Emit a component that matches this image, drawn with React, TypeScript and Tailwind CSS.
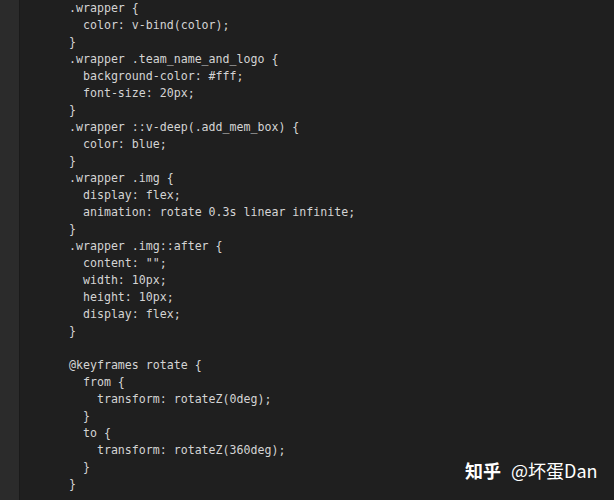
import React from "react";

const lines: string[] = [
  ".wrapper {",
  "  color: v-bind(color);",
  "}",
  ".wrapper .team_name_and_logo {",
  "  background-color: #fff;",
  "  font-size: 20px;",
  "}",
  ".wrapper ::v-deep(.add_mem_box) {",
  "  color: blue;",
  "}",
  ".wrapper .img {",
  "  display: flex;",
  "  animation: rotate 0.3s linear infinite;",
  "}",
  ".wrapper .img::after {",
  '  content: "";',
  "  width: 10px;",
  "  height: 10px;",
  "  display: flex;",
  "}",
  "",
  "@keyframes rotate {",
  "  from {",
  "    transform: rotateZ(0deg);",
  "  }",
  "  to {",
  "    transform: rotateZ(360deg);",
  "  }",
  "}",
];

export default function App() {
  return (
    <div className="relative flex h-[500px] w-[614px] overflow-hidden bg-[#1f1f1f]">
      <div className="w-[20px] shrink-0 bg-[#2b2b2b] border-r border-[#1a1a1a]" />
      <div className="pl-[49px] pt-0 mt-[-0.5px]">
        {lines.map((l, i) => (
          <div
            key={i}
            className="h-[17px] whitespace-pre text-[11.6px] leading-[17px] text-[#d4d4d4]"
            style={{ fontFamily: '"DejaVu Sans Mono", monospace' }}
          >
            {l || " "}
          </div>
        ))}
      </div>
      <div
        className="absolute left-[465px] top-[458px] flex items-center text-[18px] leading-[24px] text-white"
        style={{ fontFamily: '"Noto Sans CJK SC", "Noto Sans", sans-serif' }}
      >
        <span className="font-semibold">知乎</span>
        <span className="ml-[10px]">@坏蛋Dan</span>
      </div>
    </div>
  );
}
